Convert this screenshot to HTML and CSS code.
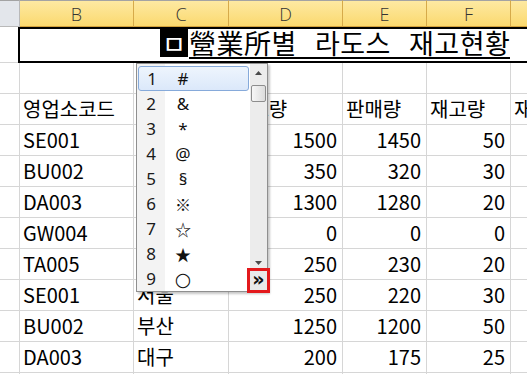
FILE: index.html
```html
<!DOCTYPE html>
<html lang="ko">
<head>
<meta charset="utf-8">
<link rel="stylesheet" href="styles.css">
</head>
<body>
<div class="sheet">
  <div class="grid">
    <div class="hd hd-a"></div>
    <div class="hd">B</div>
    <div class="hd">C</div>
    <div class="hd">D</div>
    <div class="hd">E</div>
    <div class="hd">F</div>
    <div class="hd">G</div>

    <div class="c blank-a"></div>
    <div class="title"><span class="ime">ㅁ</span><span class="ttl">營業所별 라도스 재고현황</span></div>

    <div class="c"></div><div class="c"></div><div class="c"></div><div class="c"></div><div class="c"></div><div class="c"></div><div class="c"></div>

    <div class="c"></div><div class="c">영업소코드</div><div class="c">영업소명</div><div class="c">입고량</div><div class="c">판매량</div><div class="c">재고량</div><div class="c">재고율</div>

    <div class="c"></div><div class="c">SE001</div><div class="c">서울</div><div class="c n">1500</div><div class="c n">1450</div><div class="c n">50</div><div class="c"></div>
    <div class="c"></div><div class="c">BU002</div><div class="c">부산</div><div class="c n">350</div><div class="c n">320</div><div class="c n">30</div><div class="c"></div>
    <div class="c"></div><div class="c">DA003</div><div class="c">대구</div><div class="c n">1300</div><div class="c n">1280</div><div class="c n">20</div><div class="c"></div>
    <div class="c"></div><div class="c">GW004</div><div class="c">광주</div><div class="c n">0</div><div class="c n">0</div><div class="c n">0</div><div class="c"></div>
    <div class="c"></div><div class="c">TA005</div><div class="c">대전</div><div class="c n">250</div><div class="c n">230</div><div class="c n">20</div><div class="c"></div>
    <div class="c"></div><div class="c">SE001</div><div class="c">서울</div><div class="c n">250</div><div class="c n">220</div><div class="c n">30</div><div class="c"></div>
    <div class="c"></div><div class="c">BU002</div><div class="c">부산</div><div class="c n">1250</div><div class="c n">1200</div><div class="c n">50</div><div class="c"></div>
    <div class="c"></div><div class="c">DA003</div><div class="c">대구</div><div class="c n">200</div><div class="c n">175</div><div class="c n">25</div><div class="c"></div>
    <div class="c"></div><div class="c"></div><div class="c"></div><div class="c"></div><div class="c"></div><div class="c"></div><div class="c"></div>
  </div>

  <div class="popup">
    <div class="list">
      <div class="item sel"><span class="num">1</span><span class="sym">#</span></div>
      <div class="item"><span class="num">2</span><span class="sym">&amp;</span></div>
      <div class="item"><span class="num">3</span><span class="sym">*</span></div>
      <div class="item"><span class="num">4</span><span class="sym">@</span></div>
      <div class="item"><span class="num">5</span><span class="sym">§</span></div>
      <div class="item"><span class="num">6</span><span class="sym cjk">※</span></div>
      <div class="item"><span class="num">7</span><span class="sym cjk">☆</span></div>
      <div class="item"><span class="num">8</span><span class="sym cjk">★</span></div>
      <div class="item"><span class="num">9</span><span class="sym circ">○</span></div>
    </div>
    <div class="sbar">
      <div class="arr up"><svg width="7" height="4" viewBox="0 0 7 4"><path d="M0 4 L3.5 0 L7 4 Z" fill="#4a4a4a"/></svg></div>
      <div class="thumb"></div>
      <div class="track"></div>
      <div class="arr down"><svg width="7" height="4" viewBox="0 0 7 4"><path d="M0 0 L3.5 4 L7 0 Z" fill="#4a4a4a"/></svg></div>
      <div class="more">»</div>
    </div>
  </div>
</div>
</body>
</html>
```
FILE: styles.css
```css
html, body {
  margin: 0;
  padding: 0;
  background: #fff;
  overflow: hidden;
}

.sheet {
  position: relative;
  width: 527px;
  height: 374px;
  overflow: hidden;
}

.grid {
  display: grid;
  width: 611px;
  grid-template-columns: 20px 114px 95px 114px 84px 84px 100px;
  grid-template-rows: 27px 36px repeat(11, 31px);
}

.hd {
  box-sizing: border-box;
  border-top: 1px solid #a3a3a3;
  border-right: 1px solid #d6aa4a;
  border-bottom: 1px solid #d3a23c;
  background: linear-gradient(#fde9a2, #fbd96f);
  font-family: "Open Sans", "Liberation Sans", sans-serif;
  font-weight: 300;
  font-size: 18px;
  color: #333;
  display: flex;
  align-items: center;
  justify-content: center;
  padding-top: 1px;
}

.hd-a {
  background: #e3e6eb;
  border-right-color: #b9b9b9;
  border-bottom-color: #b9b9b9;
}

.c {
  box-sizing: border-box;
  border-right: 1px solid #d6d6d6;
  border-bottom: 1px solid #d6d6d6;
  font-family: "Noto Sans CJK KR", "Noto Sans", sans-serif;
  font-size: 20px;
  line-height: 30px;
  color: #000;
  padding: 0 3px;
  white-space: nowrap;
}

.n {
  text-align: right;
  padding-right: 5px;
}

.title {
  grid-column: 2 / -1;
  margin-left: -2px;
  box-sizing: border-box;
  border-top: 2px solid #000;
  border-left: 2px solid #000;
  border-bottom: 2px solid #000;
  display: flex;
  align-items: flex-start;
  padding-left: 140px;
  font-family: "Noto Sans CJK KR", sans-serif;
  font-size: 27px;
  white-space: nowrap;
}

.ime {
  display: inline-block;
  width: 28px;
  height: 28px;
  line-height: 28px;
  background: #000;
  color: #fff;
  text-align: center;
  font-size: 26px;
}

.ttl {
  display: inline-block;
  line-height: 28px;
  height: 28px;
  border-bottom: 2px solid #000;
  margin-left: 1px;
  letter-spacing: 0.5px;
  word-spacing: 10px;
  color: #000;
}

.popup {
  position: absolute;
  left: 136px;
  top: 63px;
  width: 132px;
  height: 229px;
  box-sizing: border-box;
  border: 1px solid #8f8f8f;
  background: #fff;
  display: flex;
  box-shadow: 2px 2px 2px rgba(0, 0, 0, 0.22);
}

.list {
  flex: 1;
  display: grid;
  grid-template-rows: repeat(9, 1fr);
  background: linear-gradient(to right, #f3f3f3 28px, #fff 28px);
}

.item {
  display: flex;
  align-items: center;
  box-sizing: border-box;
}

.sel {
  margin: 2px 1px 0 1px;
  border: 1px solid #86aada;
  border-radius: 3px;
  background: linear-gradient(#eef5fd, #dbe8fa);
}

.num {
  width: 28px;
  text-align: center;
  font-family: "Noto Sans", "DejaVu Sans", sans-serif;
  font-size: 17px;
  color: #1a1a1a;
}

.sel .num {
  width: 26px;
}

.sym {
  width: 18px;
  margin-left: 9px;
  text-align: center;
  font-family: "Noto Sans", "DejaVu Sans", sans-serif;
  font-size: 17px;
  color: #111;
}

.cjk {
  font-family: "Noto Sans CJK KR", sans-serif;
  font-size: 16px;
}

.circ {
  font-family: "DejaVu Sans", sans-serif;
  font-size: 19px;
  color: #111;
}

.sbar {
  width: 17px;
  background: #ececec;
  display: flex;
  flex-direction: column;
}

.arr {
  display: flex;
  align-items: center;
  justify-content: center;
}

.up {
  height: 17px;
}

.thumb {
  height: 17px;
  margin: 4px 1px 0 1px;
  box-sizing: border-box;
  border: 1px solid #8d8d8d;
  border-radius: 2px;
  background: linear-gradient(to right, #f7f7f7, #dcdcdc);
}

.track {
  flex: 1;
}

.down {
  height: 10px;
}

.more {
  height: 25px;
  margin: 0 -3px -2px -3px;
  box-sizing: border-box;
  border: 3px solid #e3191c;
  background: #e9e9e9;
  display: flex;
  align-items: center;
  justify-content: center;
  font-family: "DejaVu Sans", sans-serif;
  font-weight: bold;
  font-size: 19px;
  line-height: 1;
  padding-bottom: 2px;
  color: #111;
  position: relative;
  z-index: 1;
}
```
